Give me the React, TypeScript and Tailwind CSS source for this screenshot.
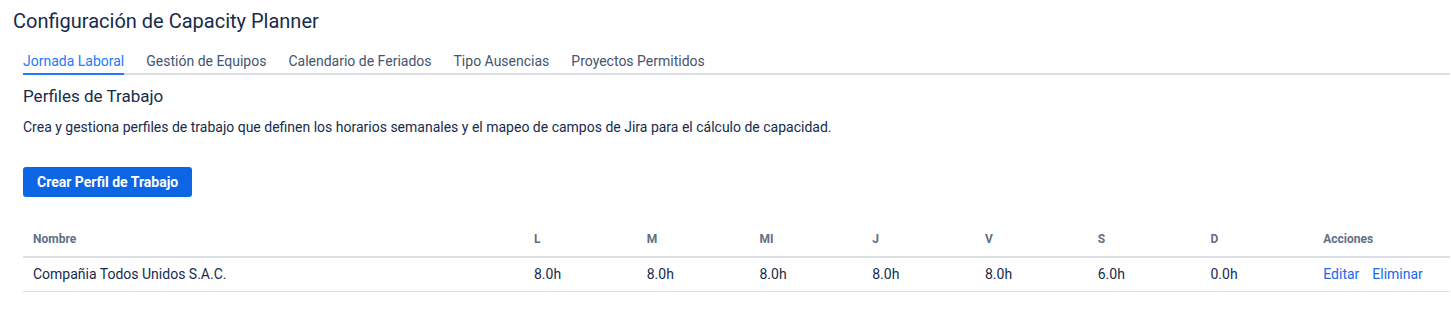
const tabs = ['Jornada Laboral', 'Gestión de Equipos', 'Calendario de Feriados', 'Tipo Ausencias', 'Proyectos Permitidos'];

const days = ['L', 'M', 'MI', 'J', 'V', 'S', 'D'];

const profiles = [
  { name: 'Compañia Todos Unidos S.A.C.', hours: ['8.0h', '8.0h', '8.0h', '8.0h', '8.0h', '6.0h', '0.0h'] },
];

export default function App() {
  return (
    <div className="min-h-screen bg-white text-[#172b4d] pl-[13px] pr-px pt-[9px]" style={{ fontFamily: 'Roboto, "Liberation Sans", sans-serif' }}>
      <h1 className="text-[20px] leading-6 font-normal">Configuración de Capacity Planner</h1>

      <div className="ml-[10px]">
        {/* Tabs */}
        <div className="mt-[18px] flex gap-[22px] border-b-2 border-[#dcdfe4]">
          {tabs.map((tab, i) => (
            <button
              key={tab}
              className={`-mb-[2px] pb-[2px] text-[14px] leading-5 border-b-2 ${i === 0 ? 'text-[#1d7afc] border-[#1d7afc]' : 'text-[#44546f] border-transparent'}`}
            >
              {tab}
            </button>
          ))}
        </div>

        {/* Section */}
        <h2 className="mt-[9px] text-[17px] leading-6 font-normal">Perfiles de Trabajo</h2>
        <p className="mt-[9px] text-[14px] leading-5 text-[#172b4d]">
          Crea y gestiona perfiles de trabajo que definen los horarios semanales y el mapeo de campos de Jira para el cálculo de capacidad.
        </p>

        <button className="mt-[30px] h-[30px] px-[14px] rounded-[3px] bg-[#0c66e4] text-white text-[14px] font-bold">
          Crear Perfil de Trabajo
        </button>

        {/* Table */}
        <div className="mt-[25px]">
          <div className="grid grid-cols-[501px_repeat(7,112.75px)_1fr] border-b-2 border-[#dcdfe4] text-[12px] leading-4 font-bold text-[#626f86]">
            <div className="px-[10px] pt-[9px] pb-[9px]">Nombre</div>
            {days.map(d => (
              <div key={d} className="px-[10px] pt-[9px] pb-[9px]">{d}</div>
            ))}
            <div className="px-[10px] pt-[9px] pb-[9px]">Acciones</div>
          </div>
          {profiles.map(p => (
            <div key={p.name} className="grid grid-cols-[501px_repeat(7,112.75px)_1fr] border-b border-[#dcdfe4] text-[14px] leading-5">
              <div className="px-[10px] pt-[6px] pb-[7px]">{p.name}</div>
              {p.hours.map((h, i) => (
                <div key={i} className="px-[10px] pt-[6px] pb-[7px]">{h}</div>
              ))}
              <div className="px-[10px] pt-[6px] pb-[7px] flex gap-[13px]">
                <a href="#" className="text-[#1868f0]">Editar</a>
                <a href="#" className="text-[#1868f0]">Eliminar</a>
              </div>
            </div>
          ))}
        </div>
      </div>
    </div>
  );
}
